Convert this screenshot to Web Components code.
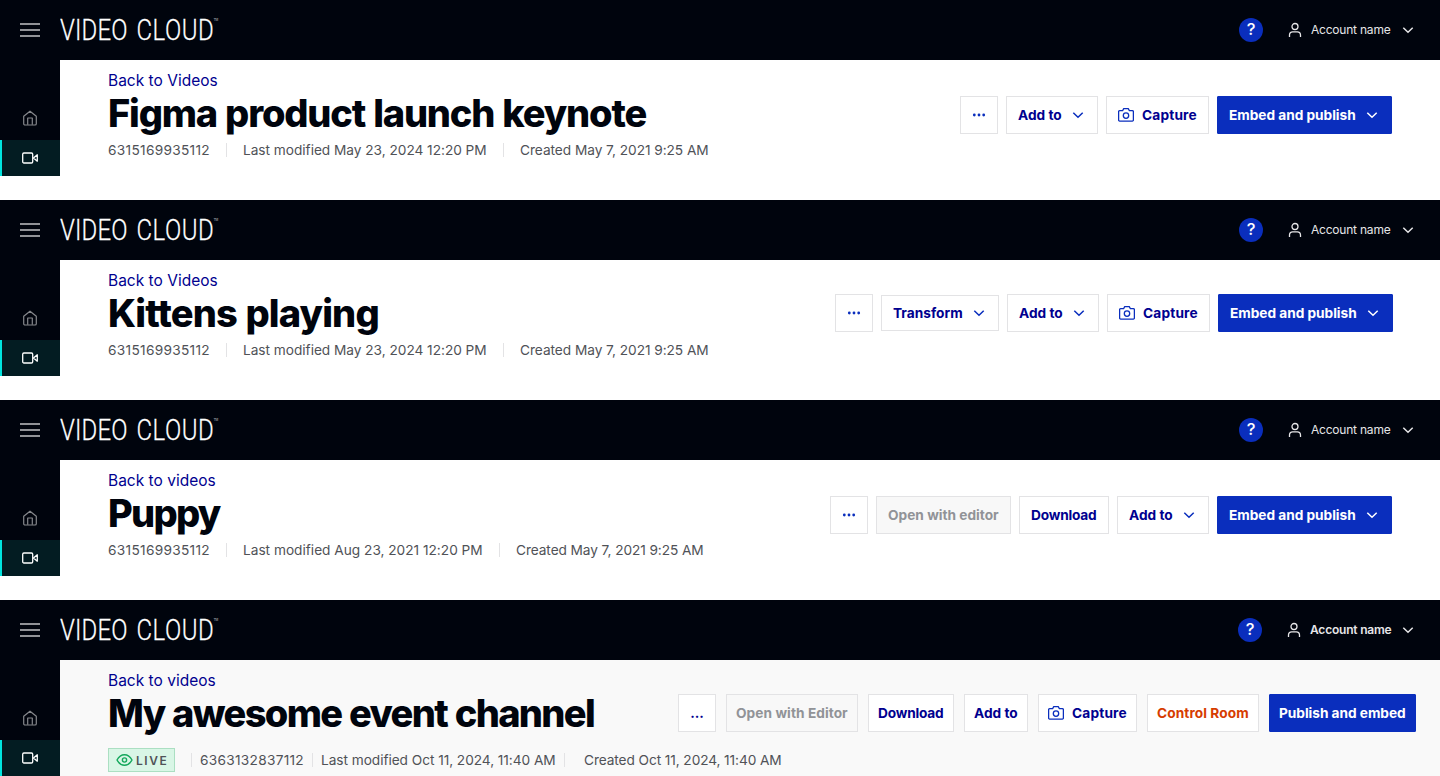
<!DOCTYPE html>
<html lang="en">
<head>
<meta charset="utf-8">
<title>Video Cloud</title>
<style>
  body {
    margin: 0;
    height: 776px;
    overflow: hidden;
    background: #fff;
    font-family: Inter, "Liberation Sans", sans-serif;
    display: flex;
    flex-direction: column;
    gap: 24px;
  }
</style>
</head>
<body>

<console-page>
  <top-bar slot="top" account="Account name" fit="80"></top-bar>
  <page-heading>
    <fit-text slot="back" fit="110">Back to Videos</fit-text>
    <fit-text slot="title" fit="539.5">Figma product launch keynote</fit-text>
    <meta-item slot="meta"><fit-text fit="102">6315169935112</fit-text></meta-item>
    <meta-item slot="meta" divided><fit-text fit="244">Last modified May 23, 2024 12:20 PM</fit-text></meta-item>
    <meta-item slot="meta" divided><fit-text fit="189">Created May 7, 2021 9:25 AM</fit-text></meta-item>
    <action-button slot="actions" kind="more"></action-button>
    <action-button slot="actions" menu><fit-text fit="44">Add to</fit-text></action-button>
    <action-button slot="actions" icon="camera"><fit-text fit="55">Capture</fit-text></action-button>
    <action-button slot="actions" kind="primary" menu><fit-text fit="127">Embed and publish</fit-text></action-button>
  </page-heading>
</console-page>

<console-page>
  <top-bar slot="top" account="Account name" fit="80"></top-bar>
  <page-heading style="--actions-top: 34px; --actions-right: 47px">
    <fit-text slot="back" fit="110">Back to Videos</fit-text>
    <fit-text slot="title" fit="272">Kittens playing</fit-text>
    <meta-item slot="meta"><fit-text fit="102">6315169935112</fit-text></meta-item>
    <meta-item slot="meta" divided><fit-text fit="244">Last modified May 23, 2024 12:20 PM</fit-text></meta-item>
    <meta-item slot="meta" divided><fit-text fit="189">Created May 7, 2021 9:25 AM</fit-text></meta-item>
    <action-button slot="actions" kind="more"></action-button>
    <action-button slot="actions" menu style="--height: 36px"><fit-text fit="70">Transform</fit-text></action-button>
    <action-button slot="actions" menu><fit-text fit="44">Add to</fit-text></action-button>
    <action-button slot="actions" icon="camera"><fit-text fit="55">Capture</fit-text></action-button>
    <action-button slot="actions" kind="primary" menu><fit-text fit="127">Embed and publish</fit-text></action-button>
  </page-heading>
</console-page>

<console-page>
  <top-bar slot="top" account="Account name" fit="80"></top-bar>
  <page-heading>
    <fit-text slot="back" fit="108">Back to videos</fit-text>
    <fit-text slot="title" fit="113.5">Puppy</fit-text>
    <meta-item slot="meta"><fit-text fit="102">6315169935112</fit-text></meta-item>
    <meta-item slot="meta" divided><fit-text fit="240">Last modified Aug 23, 2021 12:20 PM</fit-text></meta-item>
    <meta-item slot="meta" divided><fit-text fit="188">Created May 7, 2021 9:25 AM</fit-text></meta-item>
    <action-button slot="actions" kind="more"></action-button>
    <action-button slot="actions" kind="disabled"><fit-text fit="111">Open with editor</fit-text></action-button>
    <action-button slot="actions"><fit-text fit="66">Download</fit-text></action-button>
    <action-button slot="actions" menu><fit-text fit="44">Add to</fit-text></action-button>
    <action-button slot="actions" kind="primary" menu><fit-text fit="127">Embed and publish</fit-text></action-button>
  </page-heading>
</console-page>

<console-page style="--surface: #f9f9f9">
  <top-bar slot="top" account="Account name" fit="82" style="--weight: 600; --caret-gap: 8px"></top-bar>
  <page-heading style="--actions-top: 34px; --actions-right: 24px; --actions-gap: 10px; --pad: 10px; --meta-top: 10px">
    <fit-text slot="back" fit="108">Back to videos</fit-text>
    <fit-text slot="title" fit="488">My awesome event channel</fit-text>
    <live-badge slot="meta"></live-badge>
    <meta-item slot="meta" divided style="--before: 16px; --after: 8px"><fit-text fit="104">6363132837112</fit-text></meta-item>
    <meta-item slot="meta" divided style="--before: 8px; --after: 8px"><fit-text fit="235">Last modified Oct 11, 2024, 11:40 AM</fit-text></meta-item>
    <meta-item slot="meta" divided style="--before: 8px; --after: 19px"><fit-text fit="198">Created Oct 11, 2024, 11:40 AM</fit-text></meta-item>
    <action-button slot="actions" kind="more-text"><span>...</span></action-button>
    <action-button slot="actions" kind="disabled"><fit-text fit="112">Open with Editor</fit-text></action-button>
    <action-button slot="actions"><fit-text fit="66">Download</fit-text></action-button>
    <action-button slot="actions"><fit-text fit="44">Add to</fit-text></action-button>
    <action-button slot="actions" icon="camera"><fit-text fit="55">Capture</fit-text></action-button>
    <action-button slot="actions" kind="alert"><fit-text fit="92">Control Room</fit-text></action-button>
    <action-button slot="actions" kind="primary"><fit-text fit="127">Publish and embed</fit-text></action-button>
  </page-heading>
</console-page>

<script>
const icons = {
  chevron: '<svg width="16" height="16" viewBox="0 0 16 16" fill="none" stroke="currentColor" stroke-width="1.5"><path d="M3.3 5.7 8 10.3l4.7-4.6"/></svg>',
  camera: '<svg width="16" height="16" viewBox="0 0 16 16" fill="none" stroke="currentColor" stroke-width="1.3" stroke-linejoin="round"><path d="M1.6 3.7h3L5.7 1.6h4.6l1.1 2.1h3a1 1 0 0 1 1 1v8.4a1 1 0 0 1-1 1H1.6a1 1 0 0 1-1-1V4.7a1 1 0 0 1 1-1z"/><circle cx="8" cy="8.6" r="2.7"/></svg>',
  dots: '<svg width="16" height="16" viewBox="0 0 16 16" fill="currentColor"><circle cx="3.3" cy="8" r="1.4"/><circle cx="8" cy="8" r="1.4"/><circle cx="12.7" cy="8" r="1.4"/></svg>',
  person: '<svg width="16" height="16" viewBox="0 0 16 16" fill="none" stroke="currentColor" stroke-width="1.3"><circle cx="8" cy="4.5" r="3"/><path d="M2.5 14.9v-1.8a3.2 3.2 0 0 1 3.2-3.2h4.6a3.2 3.2 0 0 1 3.2 3.2v1.8"/></svg>',
  home: '<svg width="16" height="16" viewBox="0 0 16 16" fill="none" stroke="currentColor" stroke-width="1.2" stroke-linejoin="round"><path d="M1.7 6.3 8 1.2l6.3 5.1v7.4a1.3 1.3 0 0 1-1.3 1.3H3a1.3 1.3 0 0 1-1.3-1.3z"/><path d="M5.7 14.8V8h4.6v6.8"/></svg>',
  video: '<svg width="16" height="16" viewBox="0 0 16 16" fill="none" stroke="currentColor" stroke-width="1.3" stroke-linejoin="round"><rect x=".7" y="3" width="10" height="10" rx="1.2"/><path d="M15.3 4.8v6.4L11.5 8z"/></svg>',
  eye: '<svg width="17" height="16" viewBox="0 0 17 16" fill="none" stroke="currentColor" stroke-width="1.4" stroke-linejoin="round"><path d="M1 8s2.8-5.2 7.5-5.2S16 8 16 8s-2.8 5.2-7.5 5.2S1 8 1 8z"/><circle cx="8.5" cy="8" r="2.1"/></svg>'
};

class ConsolePage extends HTMLElement {
  connectedCallback() {
    this.attachShadow({ mode: 'open' }).innerHTML = `
      <style>
        :host { display: grid; grid-template: 60px 116px / 60px 1fr; height: 176px; flex: none; }
        .top { grid-column: 1 / -1; }
        nav {
          background: #00040d;
          display: flex;
          flex-direction: column;
          justify-content: flex-end;
        }
        .item {
          height: 36px;
          display: flex;
          align-items: center;
          justify-content: center;
          color: #85888c;
          margin-bottom: 4px;
        }
        .item.active {
          color: #fff;
          background: #031c22;
          box-shadow: inset 2px 0 #00e5df;
          margin: 0;
        }
        main { background: var(--surface, #fff); min-width: 0; }
      </style>
      <div class="top"><slot name="top"></slot></div>
      <nav>
        <div class="item">${icons.home}</div>
        <div class="item active">${icons.video}</div>
      </nav>
      <main><slot></slot></main>
    `;
  }
}

class TopBar extends HTMLElement {
  connectedCallback() {
    this.attachShadow({ mode: 'open' }).innerHTML = `
      <style>
        :host {
          display: flex;
          align-items: center;
          height: 60px;
          box-sizing: border-box;
          padding: 0 24px 0 20px;
          background: #00040d;
          color: #e6e6e8;
        }
        .burger {
          width: 20px;
          height: 14px;
          display: flex;
          flex-direction: column;
          justify-content: space-between;
          margin-right: 20px;
        }
        .burger i { height: 2px; background: #919397; }
        .logo { flex: none; margin-right: auto; font-family: Roboto, sans-serif; font-weight: 300; }
        .help {
          width: 24px;
          height: 24px;
          border-radius: 50%;
          background: #0a2ebd;
          color: #fff;
          font-size: 16.5px;
          font-weight: 500;
          line-height: 23px;
          text-align: center;
          margin-right: 24px;
        }
        .account { display: flex; align-items: center; font-size: 12px; line-height: 14px; font-weight: var(--weight, 400); }
        .account fit-text { margin: 0 var(--caret-gap, 9px) 1px 8px; }
        svg { display: block; }
      </style>
      <div class="burger"><i></i><i></i><i></i></div>
      <svg class="logo" width="180" height="44" viewBox="0 0 180 44" fill="#fff">
        <g stroke="#fff" stroke-width=".25" transform="scale(.8 1)">
          <text x="0" y="32" font-size="30" textLength="84.4">VIDEO</text>
          <text x="95.6" y="32" font-size="30" textLength="96.6">CLOUD</text>
        </g>
        <text x="153.8" y="13" font-size="3">TM</text>
      </svg>
      <div class="help">?</div>
      <div class="account">${icons.person}<fit-text fit="${this.getAttribute('fit')}">${this.getAttribute('account')}</fit-text>${icons.chevron}</div>
    `;
  }
}

class PageHeading extends HTMLElement {
  connectedCallback() {
    this.attachShadow({ mode: 'open' }).innerHTML = `
      <style>
        :host {
          display: grid;
          grid-template-columns: auto 1fr;
          grid-template-rows: 21px 44px auto;
          align-content: start;
          box-sizing: border-box;
          padding: 10px 0 0 48px;
          height: 116px;
        }
        .back { grid-area: 1 / 1; font-size: 15.5px; line-height: 21px; color: #00008f; }
        .title {
          grid-area: 2 / 1;
          font-size: 38px;
          line-height: 45px;
          font-weight: 800;
          word-spacing: 1px;
          color: #00040d;
        }
        .meta {
          grid-area: 3 / 1 / 4 / 3;
          display: flex;
          align-items: center;
          height: 24px;
          margin-top: calc(3px + var(--meta-top, 0px));
          font-size: 13.7px;
          color: #505257;
        }
        .actions {
          grid-area: 1 / 2 / 3 / 3;
          justify-self: end;
          display: flex;
          align-items: center;
          height: 38px;
          gap: var(--actions-gap, 8px);
          margin-top: calc(var(--actions-top, 36px) - 10px);
          margin-right: var(--actions-right, 48px);
          font-size: 13.7px;
          font-weight: 700;
        }
      </style>
      <div class="back"><slot name="back"></slot></div>
      <div class="title"><slot name="title"></slot></div>
      <div class="meta"><slot name="meta"></slot></div>
      <div class="actions"><slot name="actions"></slot></div>
    `;
  }
}

class MetaItem extends HTMLElement {
  connectedCallback() {
    this.attachShadow({ mode: 'open' }).innerHTML = `
      <style>
        :host { display: flex; align-items: center; line-height: 20px; }
        :host([divided])::before {
          content: "";
          width: 1px;
          height: 14px;
          background: #e3e3e5;
          margin: 0 var(--after, 16px) 0 var(--before, 16px);
        }
      </style>
      <slot></slot>
    `;
  }
}

class LiveBadge extends HTMLElement {
  connectedCallback() {
    this.attachShadow({ mode: 'open' }).innerHTML = `
      <style>
        :host {
          display: flex;
          align-items: center;
          gap: 3px;
          box-sizing: border-box;
          width: 67px;
          height: 24px;
          padding-left: 7px;
          border: 1px solid #abdfc2;
          background: #d9f6e6;
          color: #505257;
          font-size: 12px;
          font-weight: 600;
        }
        svg { color: #13a75b; flex: none; }
      </style>
      ${icons.eye}<fit-text fit="31">LIVE</fit-text>
    `;
  }
}

class ActionButton extends HTMLElement {
  connectedCallback() {
    const icon = this.getAttribute('icon');
    this.attachShadow({ mode: 'open' }).innerHTML = `
      <style>
        :host {
          display: flex;
          align-items: center;
          justify-content: center;
          gap: 8px;
          box-sizing: border-box;
          height: var(--height, 38px);
          padding: 0 calc(var(--pad, 12px) - 1px);
          border: 1px solid #e3e3e5;
          background: #fff;
          color: #00008f;
          line-height: 20px;
        }
        :host([kind^="more"]) { width: 38px; padding: 0; }
        :host([kind="disabled"]) { background: #f8f8f8; color: #919397; }
        :host([kind="alert"]) { color: #d63c00; }
        :host([kind="primary"]) { background: #0a2ebd; border-color: #0a2ebd; border-radius: 1px; color: #fff; }
        svg { display: block; color: #0a2ebd; }
        :host([kind="primary"]) svg { color: #fff; }
      </style>
      ${this.getAttribute('kind') === 'more' ? icons.dots : ''}
      ${icon ? icons[icon] : ''}
      <slot></slot>
      ${this.hasAttribute('menu') ? icons.chevron : ''}
    `;
    if (this.getAttribute('kind') === 'more') {
      this.shadowRoot.querySelector('slot').remove();
    }
  }
}

// Tracks a label in or out so that it fills the width given in "fit"
class FitText extends HTMLElement {
  connectedCallback() {
    this.attachShadow({ mode: 'open' }).innerHTML = `
      <style>
        :host { display: block; white-space: nowrap; }
        span { display: inline-block; }
      </style>
      <span><slot></slot></span>
    `;
    const target = Number(this.getAttribute('fit'));
    const span = this.shadowRoot.querySelector('span');
    const natural = span.getBoundingClientRect().width;
    span.style.letterSpacing = (target - 0.3 - natural) / (this.textContent.length - 1) + 'px';
    this.style.width = target + 'px';
  }
}

customElements.define('console-page', ConsolePage);
customElements.define('top-bar', TopBar);
customElements.define('page-heading', PageHeading);
customElements.define('meta-item', MetaItem);
customElements.define('live-badge', LiveBadge);
customElements.define('action-button', ActionButton);
// Last, since it measures text inside the other elements
customElements.define('fit-text', FitText);
</script>
</body>
</html>
